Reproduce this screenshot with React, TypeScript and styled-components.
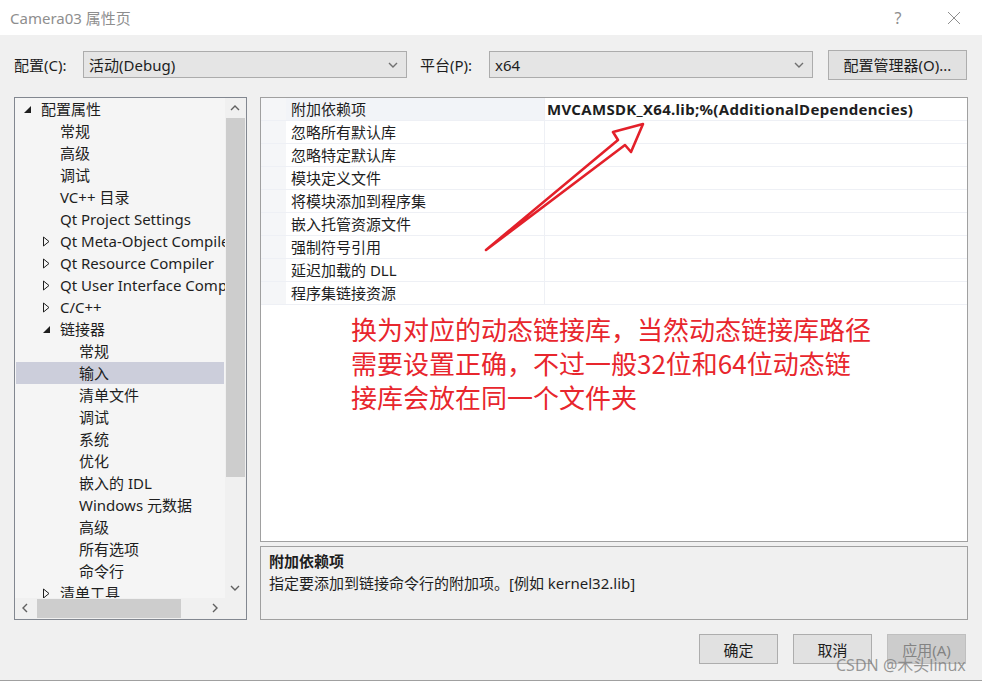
import React from 'react'
import styled, { createGlobalStyle } from 'styled-components'

const GlobalStyle = createGlobalStyle`
  html, body {
    margin: 0;
    padding: 0;
    background: #f0f0f0;
  }
  body {
    font-family: "Noto Sans", "Noto Sans CJK SC", sans-serif;
    font-size: 15px;
    color: #1e1e1e;
  }
`

const FONT = `"Noto Sans", "Noto Sans CJK SC", sans-serif`

const Dialog = styled.div`
  position: relative;
  width: 982px;
  height: 682px;
  overflow: hidden;
  background: #f0f0f0;
  display: flex;
  flex-direction: column;
  font-family: ${FONT};
`

const TitleBar = styled.div`
  height: 35px;
  background: #ffffff;
  display: flex;
  align-items: center;
  padding-left: 10px;
  flex-shrink: 0;
`

const TitleText = styled.div`
  flex: 1;
  color: #8e8e8e;
  font-size: 15px;
`

const TitleButton = styled.div`
  width: 56px;
  height: 35px;
  display: flex;
  align-items: center;
  justify-content: center;
  color: #8e8e8e;
  font-size: 16px;
`

const ConfigRow = styled.div`
  height: 59px;
  display: flex;
  align-items: center;
  padding-left: 14px;
  flex-shrink: 0;
`

const FieldLabel = styled.div<{ $w: number; $ml?: number }>`
  width: ${p => p.$w}px;
  margin-left: ${p => p.$ml || 0}px;
  font-size: 15px;
`

const Combo = styled.div`
  width: 324px;
  height: 27px;
  box-sizing: border-box;
  border: 1px solid #acacac;
  background: #e5e5e5;
  display: flex;
  align-items: center;
  padding: 0 8px 0 5px;
  font-size: 15px;
`

const ComboText = styled.div`
  flex: 1;
`

const PushButton = styled.div<{ $w: number; $disabled?: boolean }>`
  width: ${p => p.$w}px;
  height: 30px;
  box-sizing: border-box;
  border: 1px solid ${p => (p.$disabled ? '#bfbfbf' : '#adadad')};
  background: ${p => (p.$disabled ? '#cccccc' : '#e1e1e1')};
  color: ${p => (p.$disabled ? '#838383' : '#1e1e1e')};
  display: flex;
  align-items: center;
  justify-content: center;
  font-size: 15px;
`

const ManagerButton = styled(PushButton)`
  margin-left: 15px;
`

const Main = styled.div`
  height: 526px;
  padding: 3px 14px 0 14px;
  box-sizing: border-box;
  display: flex;
  gap: 13px;
  flex-shrink: 0;
`

const TreeBox = styled.div`
  width: 233px;
  height: 523px;
  box-sizing: border-box;
  border: 1px solid #828790;
  background: #f5f5f5;
  display: grid;
  grid-template-columns: 1fr 21px;
  grid-template-rows: 500px 21px;
`

const TreeRows = styled.div`
  overflow: hidden;
`

const TreeRow = styled.div<{ $level: number; $selected?: boolean }>`
  height: 22px;
  line-height: 20px;
  display: flex;
  align-items: center;
  white-space: nowrap;
  padding-left: ${p => 7 + p.$level * 19}px;
  background: ${p => (p.$selected ? '#cccedb' : 'transparent')};
  margin: 0 1px;
  font-size: 15px;
`

const Expander = styled.div`
  width: 18px;
  height: 22px;
  flex-shrink: 0;
  display: flex;
  align-items: center;
`

const ScrollTrack = styled.div<{ $vertical?: boolean }>`
  background: #f0f0f0;
  display: flex;
  flex-direction: ${p => (p.$vertical ? 'column' : 'row')};
  align-items: stretch;
`

const ScrollArrow = styled.div`
  width: 20px;
  height: 20px;
  flex-shrink: 0;
  display: flex;
  align-items: center;
  justify-content: center;
`

const ScrollThumb = styled.div<{ $len: number; $vertical?: boolean }>`
  background: #cdcdcd;
  ${p => (p.$vertical ? `height: ${p.$len}px; margin: 0 1px;` : `width: ${p.$len}px; margin: 1px 2px 1px 2px;`)}
`

const Spacer = styled.div`
  flex: 1;
`

const Corner = styled.div`
  background: #f0f0f0;
`

const RightColumn = styled.div`
  width: 708px;
  display: flex;
  flex-direction: column;
  gap: 4px;
`

const PropGrid = styled.div`
  height: 448px;
  box-sizing: border-box;
  border: 1px solid #a0a0a0;
  background: #ffffff;
`

const PropRow = styled.div`
  display: grid;
  grid-template-columns: 25px 259px 1fr;
  height: 23px;
  line-height: 20px;
  box-sizing: border-box;
  border-bottom: 1px solid #eef0f5;
  font-size: 15px;
`

const PropMargin = styled.div`
  background: #f5f6f8;
`

const PropName = styled.div<{ $selected?: boolean }>`
  padding-left: 5px;
  display: flex;
  align-items: center;
  background: ${p => (p.$selected ? '#f2f4f8' : '#ffffff')};
  border-right: 1px solid #eef0f5;
  white-space: nowrap;
`

const PropValue = styled.div`
  padding-left: 2px;
  display: flex;
  align-items: center;
  font-weight: 700;
  letter-spacing: 0.3px;
  white-space: nowrap;
`

const DescBox = styled.div`
  height: 74px;
  box-sizing: border-box;
  border: 1px solid #a0a0a0;
  background: #f0f0f0;
  padding: 3px 8px;
`

const DescTitle = styled.div`
  font-weight: 700;
  line-height: 22px;
  font-size: 15px;
`

const DescText = styled.div`
  line-height: 22px;
  font-size: 15px;
`

const Footer = styled.div`
  height: 60px;
  padding: 14px 16px 0 0;
  box-sizing: border-box;
  display: flex;
  justify-content: flex-end;
  gap: 15px;
  flex-shrink: 0;
`

const BehindWindow = styled.div`
  height: 2px;
  border-top: 1px solid #a0a0a0;
  background: #ffffff;
`

const Annotation = styled.div`
  position: absolute;
  left: 351px;
  top: 312px;
  color: #e8262d;
  font-family: "Noto Sans CJK SC", sans-serif;
  font-size: 26px;
  line-height: 34px;
  white-space: nowrap;
`

const ArrowSvg = styled.svg`
  position: absolute;
  left: 480px;
  top: 115px;
  pointer-events: none;
`

const Watermark = styled.div`
  position: absolute;
  left: 836px;
  top: 652px;
  color: rgba(120, 120, 120, 0.75);
  font-size: 16px;
  font-family: "Noto Sans", "Noto Sans CJK SC", sans-serif;
  white-space: nowrap;
`

const Chevron = ({ dir, color = '#606060', size = 10 }: { dir: 'up' | 'down' | 'left' | 'right'; color?: string; size?: number }) => {
  const d = {
    up: 'M1 7 L5 3 L9 7',
    down: 'M1 3 L5 7 L9 3',
    left: 'M7 1 L3 5 L7 9',
    right: 'M3 1 L7 5 L3 9',
  }[dir]
  return (
    <svg width={size} height={size} viewBox="0 0 10 10">
      <path d={d} fill="none" stroke={color} strokeWidth="1.4" />
    </svg>
  )
}

const Triangle = ({ open }: { open: boolean }) =>
  open ? (
    <svg width="9" height="9" viewBox="0 0 9 9">
      <path d="M8 1 L8 8 L1 8 Z" fill="#1e1e1e" />
    </svg>
  ) : (
    <svg width="9" height="11" viewBox="0 0 9 11">
      <path d="M1.5 1 L7 5.5 L1.5 10 Z" fill="none" stroke="#1e1e1e" strokeWidth="1" />
    </svg>
  )

type Node = { label: string; level: number; exp?: 'open' | 'closed'; selected?: boolean }

const tree: Node[] = [
  { label: '配置属性', level: 0, exp: 'open' },
  { label: '常规', level: 1 },
  { label: '高级', level: 1 },
  { label: '调试', level: 1 },
  { label: 'VC++ 目录', level: 1 },
  { label: 'Qt Project Settings', level: 1 },
  { label: 'Qt Meta-Object Compiler', level: 1, exp: 'closed' },
  { label: 'Qt Resource Compiler', level: 1, exp: 'closed' },
  { label: 'Qt User Interface Compiler', level: 1, exp: 'closed' },
  { label: 'C/C++', level: 1, exp: 'closed' },
  { label: '链接器', level: 1, exp: 'open' },
  { label: '常规', level: 2 },
  { label: '输入', level: 2, selected: true },
  { label: '清单文件', level: 2 },
  { label: '调试', level: 2 },
  { label: '系统', level: 2 },
  { label: '优化', level: 2 },
  { label: '嵌入的 IDL', level: 2 },
  { label: 'Windows 元数据', level: 2 },
  { label: '高级', level: 2 },
  { label: '所有选项', level: 2 },
  { label: '命令行', level: 2 },
  { label: '清单工具', level: 1, exp: 'closed' },
]

const props = [
  { name: '附加依赖项', value: 'MVCAMSDK_X64.lib;%(AdditionalDependencies)' },
  { name: '忽略所有默认库', value: '' },
  { name: '忽略特定默认库', value: '' },
  { name: '模块定义文件', value: '' },
  { name: '将模块添加到程序集', value: '' },
  { name: '嵌入托管资源文件', value: '' },
  { name: '强制符号引用', value: '' },
  { name: '延迟加载的 DLL', value: '' },
  { name: '程序集链接资源', value: '' },
]

export default function App() {
  return (
    <Dialog>
      <GlobalStyle />
      <TitleBar>
        <TitleText>Camera03 属性页</TitleText>
        <TitleButton>?</TitleButton>
        <TitleButton>
          <svg width="14" height="14" viewBox="0 0 14 14">
            <path d="M1 1 L13 13 M13 1 L1 13" stroke="#8e8e8e" strokeWidth="1" />
          </svg>
        </TitleButton>
      </TitleBar>

      <ConfigRow>
        <FieldLabel $w={69}>配置(C):</FieldLabel>
        <Combo>
          <ComboText>活动(Debug)</ComboText>
          <Chevron dir="down" color="#707070" />
        </Combo>
        <FieldLabel $w={69} $ml={13}>平台(P):</FieldLabel>
        <Combo>
          <ComboText>x64</ComboText>
          <Chevron dir="down" color="#707070" />
        </Combo>
        <ManagerButton $w={139}>配置管理器(O)...</ManagerButton>
      </ConfigRow>

      <Main>
        <TreeBox>
          <TreeRows>
            {tree.map((n, i) => (
              <TreeRow key={i} $level={n.level} $selected={n.selected}>
                <Expander>{n.exp && <Triangle open={n.exp === 'open'} />}</Expander>
                {n.label}
              </TreeRow>
            ))}
          </TreeRows>
          <ScrollTrack $vertical>
            <ScrollArrow>
              <Chevron dir="up" />
            </ScrollArrow>
            <ScrollThumb $vertical $len={359} />
            <Spacer />
            <ScrollArrow>
              <Chevron dir="down" />
            </ScrollArrow>
          </ScrollTrack>
          <ScrollTrack>
            <ScrollArrow>
              <Chevron dir="left" />
            </ScrollArrow>
            <ScrollThumb $len={144} />
            <Spacer />
            <ScrollArrow>
              <Chevron dir="right" />
            </ScrollArrow>
          </ScrollTrack>
          <Corner />
        </TreeBox>

        <RightColumn>
          <PropGrid>
            {props.map((p, i) => (
              <PropRow key={i}>
                <PropMargin />
                <PropName $selected={i === 0}>{p.name}</PropName>
                <PropValue>{p.value}</PropValue>
              </PropRow>
            ))}
          </PropGrid>
          <DescBox>
            <DescTitle>附加依赖项</DescTitle>
            <DescText>指定要添加到链接命令行的附加项。[例如 kernel32.lib]</DescText>
          </DescBox>
        </RightColumn>
      </Main>

      <Footer>
        <PushButton $w={79}>确定</PushButton>
        <PushButton $w={79}>取消</PushButton>
        <PushButton $w={79} $disabled>应用(A)</PushButton>
      </Footer>
      <BehindWindow />

      <ArrowSvg width="170" height="145" viewBox="0 0 170 145">
        <path
          d="M6 135 L138 25 L133 17 L163 9 L151 37 L145 30 Z"
          fill="none"
          stroke="#e3202a"
          strokeWidth="2.6"
          strokeLinejoin="round"
        />
      </ArrowSvg>

      <Annotation>
        <div>换为对应的动态链接库，当然动态链接库路径</div>
        <div>需要设置正确，不过一般32位和64位动态链</div>
        <div>接库会放在同一个文件夹</div>
      </Annotation>

      <Watermark>CSDN @木头linux</Watermark>
    </Dialog>
  )
}
